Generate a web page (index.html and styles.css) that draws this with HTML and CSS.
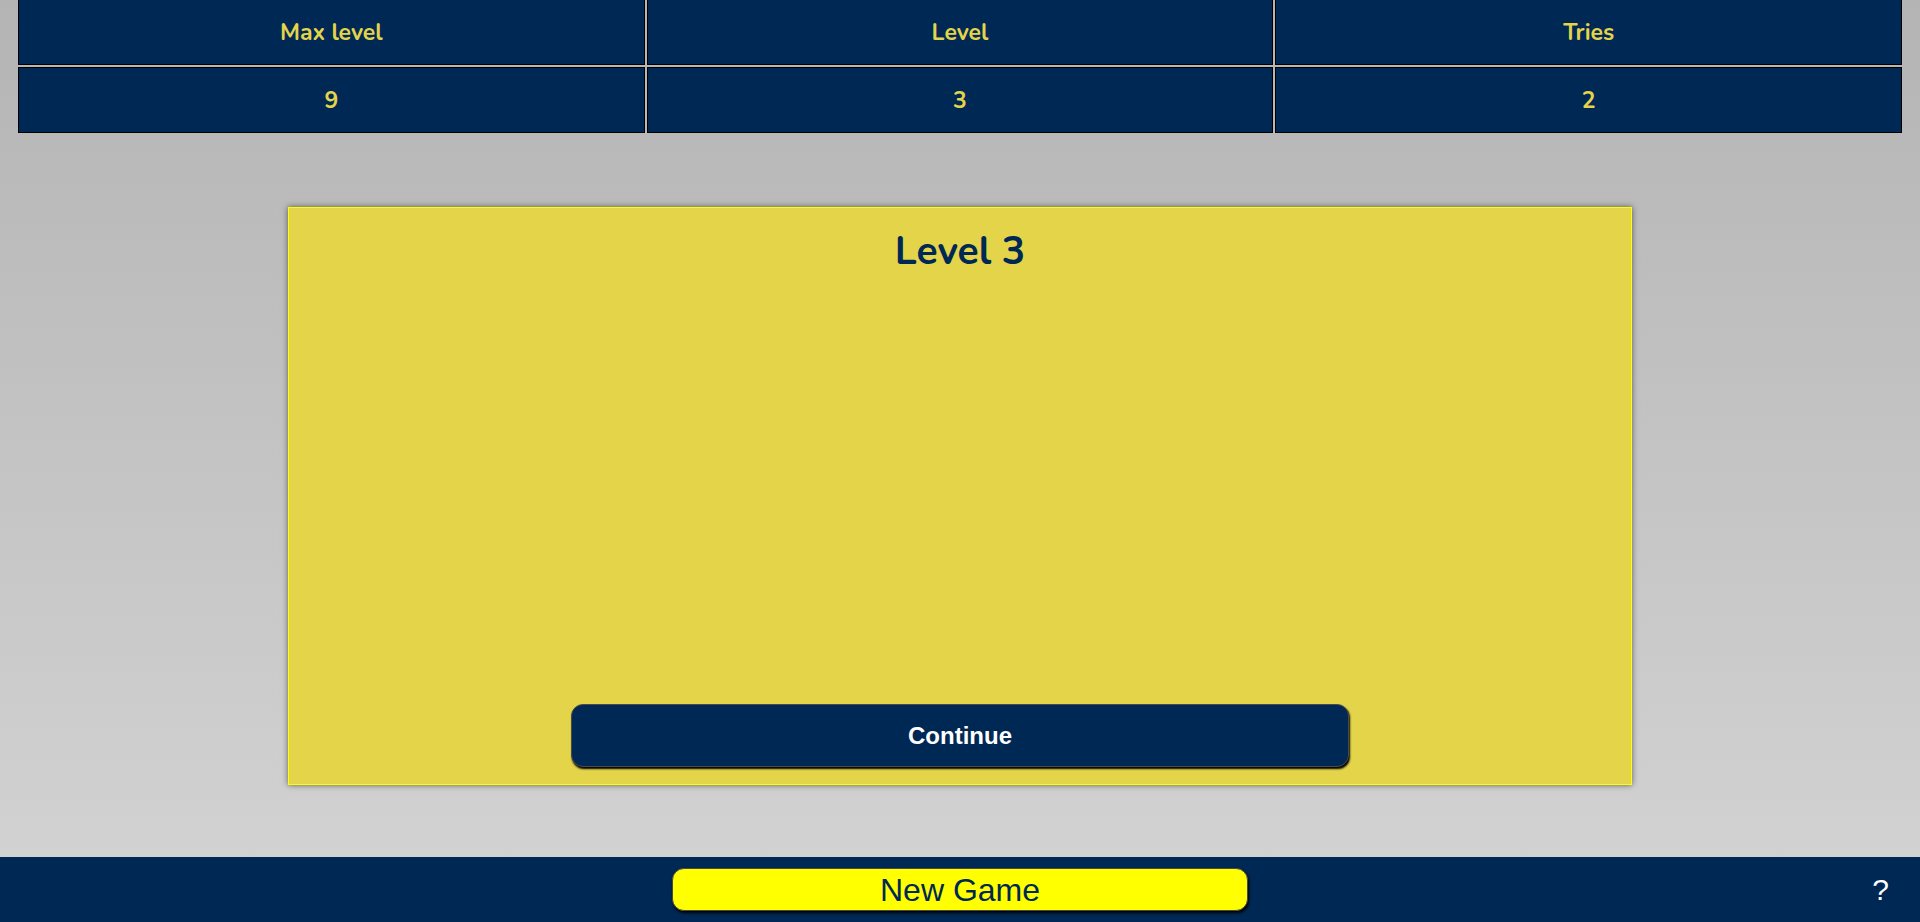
FILE: index.html
```html
<!DOCTYPE html>
<html lang="en">
<head>
  <meta charset="UTF-8">
  <meta name="viewport" content="width=device-width, initial-scale=1.0">
  <title>Memory Game</title>
  <link rel="stylesheet" href="styles.css">
</head>
<body>
  <table class="scoreboard">
    <tr>
      <th>Max level</th>
      <th>Level</th>
      <th>Tries</th>
    </tr>
    <tr>
      <td id="maxLevel">9</td>
      <td id="level">3</td>
      <td id="tries">2</td>
    </tr>
  </table>

  <div class="board">
    <h2 class="board-title">Level 3</h2>
    <button class="continue-btn" type="button">Continue</button>
  </div>

  <footer class="footer">
    <span></span>
    <button class="new-game-btn" type="button">New Game</button>
    <span class="help">?</span>
  </footer>
</body>
</html>
```

FILE: styles.css
```css
html, body {
  height: 100%;
}
body {
  margin: 0;
  display: flex;
  flex-direction: column;
  font-family: "Nunito", Lato, sans-serif;
  background: linear-gradient(#b4b4b4, #d4d4d4);
}
.scoreboard {
  width: calc(100% - 32px);
  margin: -3px 16px 0;
  border-collapse: separate;
  border-spacing: 2px;
  table-layout: fixed;
}
.scoreboard th,
.scoreboard td {
  height: 64px;
  padding: 0;
  border: 1px solid #000;
  background-color: #002855;
  color: #e3d44a;
  font-size: 23px;
  font-weight: bold;
  text-align: center;
}
.board {
  box-sizing: border-box;
  width: 70%;
  height: 578px;
  margin: 72px auto 0;
  padding-bottom: 17px;
  display: flex;
  flex-direction: column;
  align-items: center;
  background-color: #e3d44a;
  border: 1px solid #ffff00;
  box-shadow: 0 0 6px rgba(0, 0, 0, 0.55);
}
.board-title {
  margin: 17px 0 0;
  color: #002855;
  font-size: 39px;
  font-weight: bold;
}
.continue-btn {
  margin-top: auto;
  width: 58%;
  height: 63px;
  background-color: #002855;
  color: #fff;
  font-family: "Liberation Sans", Arial, sans-serif;
  font-size: 24px;
  font-weight: bold;
  border: 1px solid #4a4a4a;
  border-radius: 12px;
  box-shadow: 1px 2px 2px #000;
  cursor: pointer;
}
.footer {
  margin-top: auto;
  height: 65px;
  display: grid;
  grid-template-columns: 1fr 30% 1fr;
  align-items: center;
  background-color: #002855;
}
.new-game-btn {
  height: 43px;
  background-color: #ffff00;
  color: #002855;
  font-family: "Liberation Sans", Arial, sans-serif;
  font-size: 32px;
  line-height: 1;
  border: 1px solid #4a4a4a;
  border-radius: 12px;
  box-shadow: 1px 2px 3px #000;
  cursor: pointer;
}
.help {
  justify-self: end;
  padding-right: 31px;
  color: #fff;
  font-family: "Liberation Sans", Arial, sans-serif;
  font-size: 30px;
  cursor: pointer;
}
```
